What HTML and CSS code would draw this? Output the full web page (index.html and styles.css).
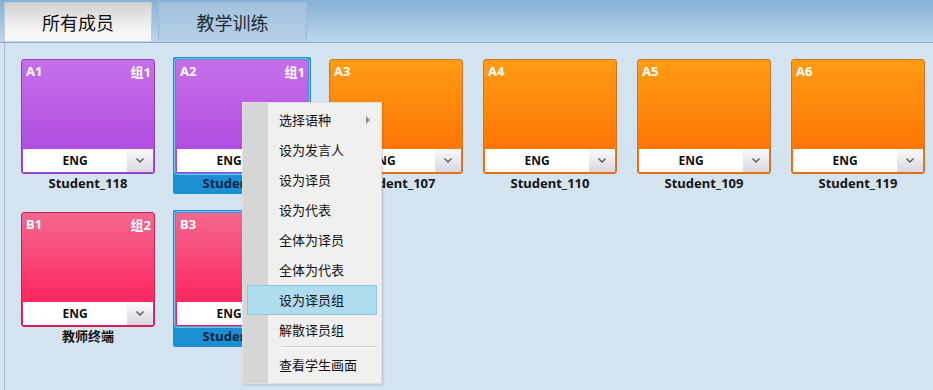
FILE: index.html
```html
<!DOCTYPE html>
<html>
<head>
    <title>所有成员</title>
    <link rel="stylesheet" href="styles.css">
</head>
<body>
    <div class="header">
        <div class="tab active">所有成员</div>
        <div class="tab">教学训练</div>
    </div>

    <div class="content">
        <div class="grid">
            <div class="cell">
                <div class="card purple">
                    <div class="tags"><span>A1</span><span>组1</span></div>
                    <div class="lang"><span class="langText">ENG</span><span class="drop"><svg width="8" height="5" viewBox="0 0 8 5"><polyline points="0.5,0.5 4,4 7.5,0.5" fill="none" stroke="#555" stroke-width="1.3"/></svg></span></div>
                </div>
                <div class="name">Student_118</div>
            </div>
            <div class="cell selected">
                <div class="card purple">
                    <div class="tags"><span>A2</span><span>组1</span></div>
                    <div class="lang"><span class="langText">ENG</span><span class="drop"><svg width="8" height="5" viewBox="0 0 8 5"><polyline points="0.5,0.5 4,4 7.5,0.5" fill="none" stroke="#555" stroke-width="1.3"/></svg></span></div>
                </div>
                <div class="name">Student_105</div>
            </div>
            <div class="cell">
                <div class="card orange">
                    <div class="tags"><span>A3</span><span></span></div>
                    <div class="lang"><span class="langText">ENG</span><span class="drop"><svg width="8" height="5" viewBox="0 0 8 5"><polyline points="0.5,0.5 4,4 7.5,0.5" fill="none" stroke="#555" stroke-width="1.3"/></svg></span></div>
                </div>
                <div class="name">Student_107</div>
            </div>
            <div class="cell">
                <div class="card orange">
                    <div class="tags"><span>A4</span><span></span></div>
                    <div class="lang"><span class="langText">ENG</span><span class="drop"><svg width="8" height="5" viewBox="0 0 8 5"><polyline points="0.5,0.5 4,4 7.5,0.5" fill="none" stroke="#555" stroke-width="1.3"/></svg></span></div>
                </div>
                <div class="name">Student_110</div>
            </div>
            <div class="cell">
                <div class="card orange">
                    <div class="tags"><span>A5</span><span></span></div>
                    <div class="lang"><span class="langText">ENG</span><span class="drop"><svg width="8" height="5" viewBox="0 0 8 5"><polyline points="0.5,0.5 4,4 7.5,0.5" fill="none" stroke="#555" stroke-width="1.3"/></svg></span></div>
                </div>
                <div class="name">Student_109</div>
            </div>
            <div class="cell">
                <div class="card orange">
                    <div class="tags"><span>A6</span><span></span></div>
                    <div class="lang"><span class="langText">ENG</span><span class="drop"><svg width="8" height="5" viewBox="0 0 8 5"><polyline points="0.5,0.5 4,4 7.5,0.5" fill="none" stroke="#555" stroke-width="1.3"/></svg></span></div>
                </div>
                <div class="name">Student_119</div>
            </div>

            <div class="cell">
                <div class="card pink">
                    <div class="tags"><span>B1</span><span>组2</span></div>
                    <div class="lang"><span class="langText">ENG</span><span class="drop"><svg width="8" height="5" viewBox="0 0 8 5"><polyline points="0.5,0.5 4,4 7.5,0.5" fill="none" stroke="#555" stroke-width="1.3"/></svg></span></div>
                </div>
                <div class="name">教师终端</div>
            </div>
            <div class="cell selected">
                <div class="card pink">
                    <div class="tags"><span>B3</span><span></span></div>
                    <div class="lang"><span class="langText">ENG</span><span class="drop"><svg width="8" height="5" viewBox="0 0 8 5"><polyline points="0.5,0.5 4,4 7.5,0.5" fill="none" stroke="#555" stroke-width="1.3"/></svg></span></div>
                </div>
                <div class="name">Student_112</div>
            </div>
        </div>
    </div>

    <!-- right click menu -->
    <div class="menu">
        <div class="item">选择语种<span class="arrow"></span></div>
        <div class="item">设为发言人</div>
        <div class="item">设为译员</div>
        <div class="item">设为代表</div>
        <div class="item">全体为译员</div>
        <div class="item">全体为代表</div>
        <div class="item hover">设为译员组</div>
        <div class="item">解散译员组</div>
        <div class="sep"></div>
        <div class="item">查看学生画面</div>
    </div>
</body>
</html>
```

FILE: styles.css
```css
body {
    margin: 0;
    width: 933px;
    height: 390px;
    overflow: hidden;
    background-color: #d4e3f0;
    font-family: 'Noto Sans', 'Noto Sans CJK SC', sans-serif;
}

.header {
    height: 40px;
    padding: 2px 0 0 4px;
    display: flex;
    gap: 6px;
    background: linear-gradient(#86b1d7, #bdd6eb);
    border-bottom: 1px solid #8ea9c2;
}

.tab {
    width: 149px;
    height: 39px;
    box-sizing: border-box;
    border: 1px solid #9cb9d3;
    border-bottom: none;
    background: linear-gradient(#a3c2de, #b4cfe6);
    color: #1f2a33;
    font-family: 'Noto Sans CJK SC', sans-serif;
    font-size: 18px;
    display: flex;
    align-items: center;
    justify-content: center;
}

.tab.active {
    width: 148px;
    background: linear-gradient(#d2d2d2, #f4f4f4 70%, #f8f8f8);
    border-color: #c4c9cf;
    color: #111;
}

.content {
    margin-left: 4px;
    height: 347px;
    border-left: 1px solid #a9bfd3;
    padding: 14px 0 0 14px;
}

.grid {
    display: grid;
    grid-template-columns: repeat(6, 138px);
    gap: 16px;
}

.cell {
    padding: 2px;
    border-radius: 2px;
}

.cell.selected {
    background-color: #1c8fd3;
}

.card {
    height: 115px;
    box-sizing: border-box;
    border: 1px solid;
    border-radius: 3px;
    padding: 0 1px 1px 1px;
    display: flex;
    flex-direction: column;
    justify-content: space-between;
}

.purple {
    background: linear-gradient(#c66fe9, #ab44df);
    border-color: #8c3fb6;
}

.orange {
    background: linear-gradient(#ff9c14, #ff6a02);
    border-color: #d2731f;
}

.pink {
    background: linear-gradient(#f46890, #ff1453);
    border-color: #c1244d;
}

.selected .card {
    border-color: #5a86dc;
    box-shadow: 0 0 0 1px #6fc7ec;
}

.tags {
    display: flex;
    justify-content: space-between;
    padding: 2px 2px 0 3px;
    color: white;
    font-size: 13px;
    font-weight: bold;
}

.lang {
    height: 23px;
    display: flex;
    background-color: white;
}

.langText {
    flex: 1;
    display: flex;
    align-items: center;
    justify-content: center;
    font-size: 12px;
    font-weight: bold;
    color: #111;
}

.drop {
    width: 26px;
    display: flex;
    align-items: center;
    justify-content: center;
    background: linear-gradient(#fbfbfc, #d9d6e1);
}

.name {
    height: 18px;
    text-align: center;
    font-size: 13px;
    font-weight: bold;
    line-height: 18px;
    color: #151515;
}

.selected .name {
    color: #0e2445;
}

.menu {
    position: absolute;
    left: 242px;
    top: 102px;
    width: 140px;
    box-sizing: border-box;
    padding: 2px 4px 3px 4px;
    background: linear-gradient(to right, #d6d6d6 25px, #f0f0f0 25px);
    border: 1px solid #e0e0e0;
    box-shadow: 1px 1px 2px rgba(0, 0, 0, 0.15);
    font-family: 'Noto Sans CJK SC', sans-serif;
    font-size: 13px;
    color: #111;
}

.item {
    position: relative;
    height: 30px;
    box-sizing: border-box;
    line-height: 28px;
    padding-left: 31px;
    border: 1px solid transparent;
}

.item.hover {
    background-color: #b0dcef;
    border-color: #86c8e5;
}

.arrow {
    position: absolute;
    right: 6px;
    top: 10px;
    border-left: 4px solid #8a8a8a;
    border-top: 4px solid transparent;
    border-bottom: 4px solid transparent;
}

.sep {
    height: 1px;
    margin: 1px 0 2px 35px;
    background-color: #cacaca;
    border-bottom: 1px solid #fafafa;
}
```
